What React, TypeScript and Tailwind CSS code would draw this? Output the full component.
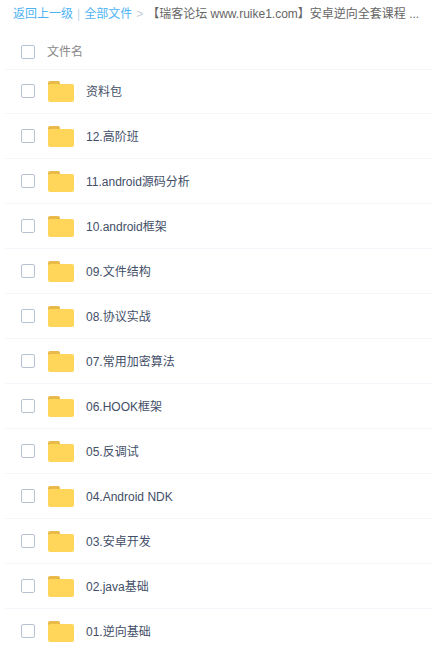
const FILES = [
  "资料包",
  "12.高阶班",
  "11.android源码分析",
  "10.android框架",
  "09.文件结构",
  "08.协议实战",
  "07.常用加密算法",
  "06.HOOK框架",
  "05.反调试",
  "04.Android NDK",
  "03.安卓开发",
  "02.java基础",
  "01.逆向基础",
];

function Checkbox() {
  return <div className="w-[14px] h-[14px] shrink-0 rounded-[2px] border border-[#b6c3d2] bg-white" />;
}

function Folder() {
  return (
    <svg width="26" height="21" viewBox="0 0 26 21" className="block shrink-0">
      <path d="M0 2a2 2 0 0 1 2-2h8a2 2 0 0 1 2 2v2H0z" fill="#e9b949" />
      <rect x="0" y="3" width="26" height="18" rx="2" fill="#ffd659" />
    </svg>
  );
}

export default function App() {
  return (
    <div className="w-[433px] h-[647px] overflow-hidden bg-white font-['Liberation_Sans','Noto_Sans_CJK_SC',sans-serif] text-xs">
      <div className="h-[27px] pl-[13px] flex items-center whitespace-nowrap leading-none">
        <span className="text-[#4eb3f5]">返回上一级</span>
        <span className="text-[#c5d8e6] mx-[4px]">|</span>
        <span className="text-[#4eb3f5]">全部文件</span>
        <span className="text-[#c4ccd4] ml-[4px] mr-[4px]">&gt;</span>
        <span className="text-[#666666]">【瑞客论坛 www.ruike1.com】安卓逆向全套课程 ...</span>
      </div>
      <div className="h-[43px] ml-[5px] pl-[16px] flex items-center gap-[12px] border-b border-[#f3f5f8] pt-[8px]">
        <Checkbox />
        <span className="text-[#888888]">文件名</span>
      </div>
      {FILES.map((name, i) => (
        <div
          key={name}
          className={
            i === 0
              ? "h-[44px] pb-[1px] ml-[5px] pl-[16px] flex items-center border-b border-[#f2f6fb]"
              : "h-[45px] ml-[5px] pl-[16px] flex items-center border-b border-[#f2f6fb]"
          }
        >
          <Checkbox />
          <div className="ml-[13px] mr-[12px]">
            <Folder />
          </div>
          <span className="text-[#424e67] translate-y-px">{name}</span>
        </div>
      ))}
    </div>
  );
}
